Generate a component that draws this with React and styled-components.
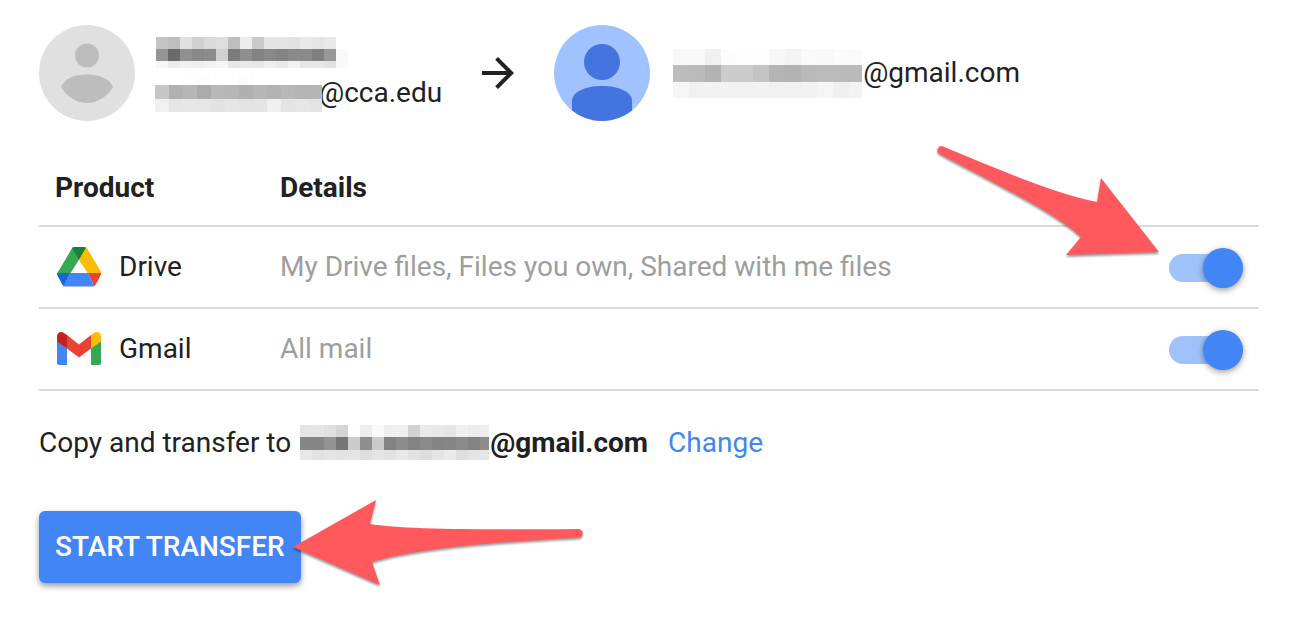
import { useState } from 'react';
import styled, { createGlobalStyle } from 'styled-components';

const GlobalStyle = createGlobalStyle`
  *, *::before, *::after {
    box-sizing: border-box;
  }
  body {
    margin: 0;
    background: #fff;
    color: #212121;
    font-family: Roboto, "Liberation Sans", sans-serif;
    font-size: 28px;
    line-height: 40px;
  }
`;

const Page = styled.main`
  padding: 25px 39px;
`;

const Accounts = styled.header`
  display: flex;
  align-items: center;
  gap: 32px;
`;

const Account = styled.div`
  display: flex;
  align-items: center;
  gap: 20px;
`;

const Line = styled.div`
  display: flex;
  align-items: center;
  height: 40px;
  white-space: nowrap;
`;

const Icon = styled.svg`
  display: block;
  flex: none;
  width: ${({ $size }) => $size}px;
  height: ${({ $size }) => $size}px;
`;

const MosaicSvg = styled.svg`
  position: relative;
  display: block;
  flex: none;
  overflow: visible;
`;

const Table = styled.table`
  width: 100%;
  margin-top: 28px;
  border-collapse: separate;
  border-spacing: 0;
  table-layout: fixed;
`;

const Th = styled.th`
  width: ${({ $width }) => $width || 'auto'};
  height: 78px;
  padding: 2px 0 0 16px;
  border-bottom: 2px solid #dadada;
  text-align: left;
  font-weight: 700;
`;

const Td = styled.td`
  position: relative;
  height: 82px;
  padding: 0 16px;
  border-bottom: 2px solid #dadada;
  color: ${({ $muted }) => ($muted ? '#9e9e9e' : 'inherit')};
`;

const Product = styled.div`
  display: flex;
  align-items: center;
  gap: 16px;
`;

const Toggle = styled.input.attrs({ type: 'checkbox' })`
  appearance: none;
  display: flex;
  align-items: center;
  justify-content: ${({ checked }) => (checked ? 'flex-end' : 'flex-start')};
  width: 74px;
  height: 28px;
  margin: 2px 0 0 auto;
  border-radius: 14px;
  background: ${({ checked }) => (checked ? '#a0c2fb' : '#bdbdbd')};
  cursor: pointer;

  &::after {
    content: '';
    flex: none;
    width: 40px;
    height: 40px;
    border-radius: 50%;
    background: ${({ checked }) => (checked ? '#4285f4' : '#fafafa')};
    box-shadow: 0 2px 6px rgba(0, 0, 0, 0.4);
  }
`;

const Target = styled.div`
  display: flex;
  align-items: center;
  margin-top: 32px;
  white-space: nowrap;
`;

const ChangeLink = styled.a`
  margin-left: 20px;
  color: #4285f4;
  text-decoration: none;
`;

const Actions = styled.div`
  position: relative;
  width: max-content;
  margin-top: 48px;
`;

const StartButton = styled.button`
  display: block;
  height: 72px;
  padding: 0 16px;
  border: 0;
  border-radius: 6px;
  background: #4285f4;
  color: #fff;
  font: inherit;
  font-weight: 500;
  box-shadow: 0 3px 6px rgba(0, 0, 0, 0.4);
  cursor: pointer;
`;

const Pointer = styled.svg`
  position: absolute;
  z-index: 1;
  overflow: visible;
  pointer-events: none;
  fill: #ff595e;
  filter: drop-shadow(0 2px 1px rgba(0, 0, 0, 0.4));
`;

const TogglePointer = styled(Pointer)`
  top: -83px;
  right: 96px;
`;

const ButtonPointer = styled(Pointer)`
  top: -13px;
  left: calc(100% - 10px);
`;

// each row: y, height, then the grey level of every cell
const NAME = {
  width: 193, height: 34, x: 1, cell: 12, end: 193,
  rows: [
    [1, 12, [196, 190, 224, 208, 218, 222, 190, 236, 202, 228, 228, 225, 233, 229, 232]],
    [13, 12, [148, 106, 144, 136, 140, 208, 124, 142, 130, 136, 132, 138, 138, 128, 152, 249]],
    [25, 7, [247, 236, 240, 238, 242, 246, 230, 233, 231, 238, 234, 242, 231, 232, 226, 250]],
  ],
};

// the last cells run a little under the address that follows
const SCHOOL = {
  width: 164, height: 40, x: 0, cell: 14, end: 167,
  rows: [
    [0, 12, [null, null, 253, 252, null, null, 252]],
    [12, 14, [198, 176, 182, 170, 184, 182, 176, 183, 178, 184, 180, 181]],
    [26, 13, [240, 229, 230, 230, 226, 229, 227, 228, 239, 228, 230, 227]],
  ],
};

const PERSONAL = {
  width: 193, height: 50, x: 3, cell: 16, end: 192,
  rows: [
    [1, 16, [248, 248, 240, 252, 253, 253, 247, 243, 250, 248, 251, 250]],
    [17, 17, [188, 186, 178, 204, 204, 196, 180, 178, 185, 187, 186, 186]],
    [34, 16, [245, 240, 242, 241, 241, 242, 240, 241, 242, 245, 239, 243]],
  ],
};

const RECEIVER = {
  width: 192, height: 36, x: 2, cell: 12, end: 191,
  rows: [
    [0, 12, [228, 229, 224, 212, 253, 238, 249, 239, 240, 210, 234, 232, 229, 240, 235, 238]],
    [12, 13, [134, 134, 148, 118, 204, 142, 202, 130, 140, 130, 138, 132, 134, 138, 130, 140]],
    [25, 10, [232, 226, 228, 227, 228, 222, 228, 226, 232, 225, 221, 228, 234, 222, 228, 230]],
  ],
};

function Mosaic({ data }) {
  return (
    <MosaicSvg width={data.width} height={data.height} shapeRendering="crispEdges" aria-hidden="true">
      {data.rows.map(([y, height, cells]) =>
        cells.map((level, i) => {
          if (level === null) return null;
          const x = data.x + i * data.cell;
          return (
            <rect
              key={`${y}-${i}`}
              x={x}
              y={y}
              width={Math.min(data.cell, data.end - x)}
              height={height}
              fill={`rgb(${level}, ${level}, ${level})`}
            />
          );
        })
      )}
    </MosaicSvg>
  );
}

function SchoolAvatar() {
  return (
    <Icon $size={96} viewBox="0 0 96 96" aria-hidden="true">
      <circle cx="48" cy="48" r="48" fill="#e0e0e0" />
      <circle cx="48" cy="30.5" r="12" fill="#bdbdbd" />
      <path d="M22 62C26 53 36 49.500 48 49.500S70 53 74 62C68 72 58 78 48 78S28 72 22 62Z" fill="#bdbdbd" />
    </Icon>
  );
}

function PersonalAvatar() {
  return (
    <Icon $size={96} viewBox="0 0 96 96" aria-hidden="true">
      <circle cx="48" cy="48" r="48" fill="#a0c2ff" />
      <circle cx="48" cy="37" r="18" fill="#4374e0" />
      <path d="M18 76C18 67 31 61 48 61S78 67 78 76V85.500A48 48 0 0 1 18 85.500Z" fill="#4374e0" />
    </Icon>
  );
}

function ArrowIcon() {
  return (
    <Icon $size={48} viewBox="0 0 24 24" fill="#212121" aria-hidden="true">
      <path d="M12 4l-1.410 1.410L16.170 11H4v2h12.170l-5.580 5.590L12 20l8-8z" />
    </Icon>
  );
}

function DriveIcon() {
  return (
    <Icon $size={48} viewBox="0 0 48 48" aria-hidden="true">
      <path d="M17.500 4.500L3 29Q2 30 2 31H15L24 16.500Z" fill="#34a853" />
      <path d="M17 5Q18 4 19 4H29.500Q30.500 4 31.500 5L24 17Z" fill="#188038" />
      <path d="M31 4.500Q32 5 32.500 6L45.500 28Q46 29 46 30.500H33L24 17Z" fill="#fbbc04" />
      <path d="M33 30H46Q46 32 45 33.500L41 41Q40 42.500 39 43.500Z" fill="#ea4335" />
      <path d="M15 30H33L39 43.500H9Z" fill="#4285f4" />
      <path d="M2 30H15L9 43.500Q8 42.500 7 41L3 33.500Q2 32 2 30Z" fill="#1967d2" />
    </Icon>
  );
}

function GmailIcon() {
  return (
    <Icon $size={48} viewBox="0 0 48 48" aria-hidden="true">
      <path d="M2 16L12 23V40H4.500Q2 40 2 37.500Z" fill="#4285f4" />
      <path d="M36 23L46 16V37.500Q46 40 43.500 40H36Z" fill="#34a853" />
      <path d="M12 10L24 19.500L36 10V23.500L24 32.500L12 23.500Z" fill="#ea4335" />
      <path d="M2 16.500V11.500C2 6.500 7 5.500 10.500 9L12 10V23.500Z" fill="#c5221f" />
      <path d="M46 16.500V11.500C46 6.500 41 5.500 37.500 9L36 10V23.500Z" fill="#fbbc04" />
    </Icon>
  );
}

const products = [
  { id: 'drive', name: 'Drive', details: 'My Drive files, Files you own, Shared with me files', icon: DriveIcon },
  { id: 'gmail', name: 'Gmail', details: 'All mail', icon: GmailIcon },
];

function App() {
  const [selected, setSelected] = useState({ drive: true, gmail: true });

  const toggle = (id) => setSelected((prev) => ({ ...prev, [id]: !prev[id] }));

  return (
    <>
      <GlobalStyle />
      <Page>
        <Accounts>
          <Account>
            <SchoolAvatar />
            <div>
              <Line>
                <Mosaic data={NAME} />
              </Line>
              <Line>
                <Mosaic data={SCHOOL} />
                <span>@cca.edu</span>
              </Line>
            </div>
          </Account>
          <ArrowIcon />
          <Account>
            <PersonalAvatar />
            <Line>
              <Mosaic data={PERSONAL} />
              <span>@gmail.com</span>
            </Line>
          </Account>
        </Accounts>

        <Table>
          <thead>
            <tr>
              <Th scope="col" $width="225px">Product</Th>
              <Th scope="col">Details</Th>
              <Th as="td" $width="106px" />
            </tr>
          </thead>
          <tbody>
            {products.map(({ id, name, details, icon: ProductIcon }) => (
              <tr key={id}>
                <Td>
                  <Product>
                    <ProductIcon />
                    <label htmlFor={id}>{name}</label>
                  </Product>
                </Td>
                <Td $muted>{details}</Td>
                <Td>
                  <Toggle id={id} checked={selected[id]} onChange={() => toggle(id)} />
                  {id === 'drive' && (
                    <TogglePointer width="228" height="116" viewBox="0 0 228 116" aria-hidden="true">
                      <path d="M8 2.500C60 24 120 50 162 58L166 34L224 108L131 111L146 93C118 67 60 40 5 10A4 4 0 0 1 8 2.500Z" />
                    </TogglePointer>
                  )}
                </Td>
              </tr>
            ))}
          </tbody>
        </Table>

        <Target>
          <span>Copy and transfer to&nbsp;</span>
          <Mosaic data={RECEIVER} />
          <strong>@gmail.com</strong>
          <ChangeLink href="#change">Change</ChangeLink>
        </Target>

        <Actions>
          <StartButton type="button">START TRANSFER</StartButton>
          <ButtonPointer width="296" height="92" viewBox="0 0 296 92" aria-hidden="true">
            <path d="M2 49L85 2L79 26C110 31 180 32 287 31A4 4 0 0 1 288 39.500C210 44 130 49 81 64L89 87Z" />
          </ButtonPointer>
        </Actions>
      </Page>
    </>
  );
}

export default App;
